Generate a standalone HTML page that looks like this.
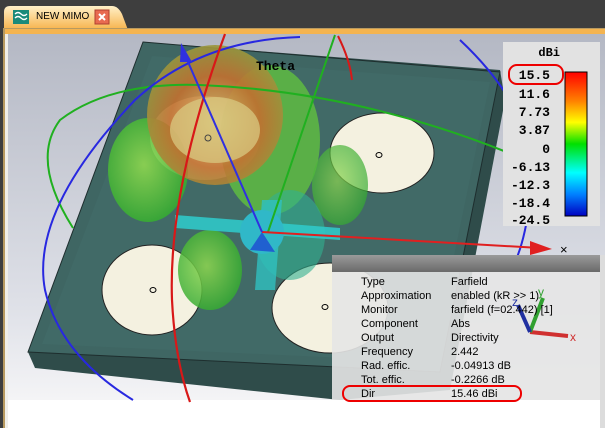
<!DOCTYPE html>
<html><head><meta charset="utf-8"><style>
html,body{margin:0;padding:0;width:605px;height:428px;overflow:hidden;background:#fff;font-family:"Liberation Sans",sans-serif}
.t{position:absolute;font-size:11px;color:#000;line-height:14px}
.m{font-family:"Liberation Mono",monospace;font-weight:bold;font-size:13px;position:absolute;text-align:right;width:50px}
</style></head><body>
<svg width="605" height="428" style="position:absolute;left:0;top:0">
<defs>
<linearGradient id="tab" x1="0" y1="0" x2="0" y2="1"><stop offset="0" stop-color="#fff0c8"/><stop offset="1" stop-color="#f7b24a"/></linearGradient>
<linearGradient id="bg" x1="0" y1="0" x2="0" y2="1"><stop offset="0" stop-color="#b4b8c4"/><stop offset=".75" stop-color="#dfe1e8"/><stop offset="1" stop-color="#f4f4f6"/></linearGradient>
<linearGradient id="cb" x1="0" y1="0" x2="0" y2="1"><stop offset="0" stop-color="#ff0000"/><stop offset=".2" stop-color="#ff8000"/><stop offset=".35" stop-color="#ffff00"/><stop offset=".5" stop-color="#00e000"/><stop offset=".7" stop-color="#00ffff"/><stop offset=".85" stop-color="#0080ff"/><stop offset="1" stop-color="#0000c0"/></linearGradient>
<linearGradient id="hd" x1="0" y1="0" x2="0" y2="1"><stop offset="0" stop-color="#9a9a9a"/><stop offset="1" stop-color="#6a6a6a"/></linearGradient>
<radialGradient id="red" cx=".5" cy=".55" r=".6"><stop offset="0" stop-color="#d8c070"/><stop offset=".55" stop-color="#c07030"/><stop offset="1" stop-color="#90a040"/></radialGradient>
<radialGradient id="grn" cx=".45" cy=".45" r=".6"><stop offset="0" stop-color="#90d850"/><stop offset="1" stop-color="#30a830"/></radialGradient>
</defs>
<rect width="605" height="428" fill="#3e3e3e"/>
<path d="M4 30 L4 12 Q4 6 10 6 L112 6 Q118 6 122 14 L128 30 Z" fill="url(#tab)"/>
<rect x="3" y="28" width="602" height="400" fill="#b89a60"/>
<rect x="5" y="29" width="600" height="5" fill="#f4b450"/>
<rect x="5" y="34" width="3" height="394" fill="#f0eee8"/>
<rect x="8" y="34" width="597" height="366" fill="url(#bg)"/>
<rect x="8" y="400" width="597" height="28" fill="#fff"/>
<rect x="13" y="10" width="16" height="14" fill="#1a8a7a"/>
<path d="M15 14 q3 -3 6 0 t6 0 M15 18 q3 -3 6 0 t6 0" stroke="#fff" fill="none" stroke-width="1.3"/>
<rect x="95" y="10" width="14" height="14" fill="#e86a50" stroke="#b04030"/>
<path d="M99 14 l6 6 M105 14 l-6 6" stroke="#fff" stroke-width="2"/>
<polygon points="143,42 500,70 505,100 450,390 340,400 35,368 28,352" fill="#2f4c4a"/>
<polygon points="143,42 500,72 440,372 28,352" fill="#3f6663" stroke="#1e2e2e" stroke-width="1"/>
<polygon points="152,56 490,82 432,362 42,344" fill="#416a67"/>
<ellipse cx="205" cy="138" rx="55" ry="42" fill="#f4f1e0"/>
<ellipse cx="382" cy="153" rx="52" ry="40" fill="#f4f1e0" stroke="#222"/>
<ellipse cx="152" cy="290" rx="50" ry="45" fill="#f4f1e0" stroke="#222"/>
<ellipse cx="330" cy="308" rx="58" ry="45" fill="#f4f1e0" stroke="#222"/>
<ellipse cx="153" cy="290" rx="3" ry="2.5" fill="none" stroke="#000"/>
<ellipse cx="379" cy="155" rx="3" ry="2.5" fill="none" stroke="#000"/>
<ellipse cx="325" cy="307" rx="3" ry="2.5" fill="none" stroke="#000"/>
<ellipse cx="148" cy="170" rx="40" ry="52" fill="url(#grn)" opacity=".9"/>
<ellipse cx="270" cy="140" rx="50" ry="75" fill="#60c040" opacity=".8"/>
<ellipse cx="340" cy="185" rx="28" ry="40" fill="url(#grn)" opacity=".7"/>
<ellipse cx="210" cy="270" rx="32" ry="40" fill="url(#grn)" opacity=".85"/>
<ellipse cx="290" cy="235" rx="35" ry="45" fill="#30b090" opacity=".6"/>
<ellipse cx="215" cy="115" rx="68" ry="70" fill="url(#red)" opacity=".92"/>
<ellipse cx="215" cy="130" rx="45" ry="33" fill="#d8c880" opacity=".75"/>
<circle cx="208" cy="138" r="3" fill="none" stroke="#444"/>
<polygon points="175,215 340,228 340,240 175,228" fill="#30c8c8" opacity=".9"/>
<polygon points="262,200 282,200 275,290 255,290" fill="#30c0c0" opacity=".8"/>
<circle cx="262" cy="232" r="22" fill="#30b8c8"/>
<polygon points="262,232 250,250 275,252" fill="#2060d0"/>
<path d="M73,228 Q30,160 60,120 Q110,82 200,85 Q380,92 560,175" fill="none" stroke="#20b020" stroke-width="2"/>
<line x1="335" y1="35" x2="268" y2="232" stroke="#20b020" stroke-width="2"/>
<path d="M300,37 Q200,40 135,100 Q30,210 45,290 Q60,355 133,400" fill="none" stroke="#2828e0" stroke-width="2"/>
<path d="M460,40 Q545,120 530,200 Q525,240 515,262" fill="none" stroke="#2828e0" stroke-width="2"/>
<path d="M225,34 Q168,190 172,300 Q175,360 190,402" fill="none" stroke="#d81818" stroke-width="2.2"/>
<path d="M338,36 Q350,60 352,80" fill="none" stroke="#d81818" stroke-width="2"/>
<line x1="262" y1="232" x2="540" y2="248" stroke="#e02020" stroke-width="2"/>
<polygon points="530,241 552,249 530,255" fill="#e02020"/>
<line x1="262" y1="232" x2="185" y2="55" stroke="#3030e0" stroke-width="2"/>
<polygon points="181,43 192,62 180,62" fill="#3030e0"/>
<text x="256" y="70" font-family="Liberation Mono,monospace" font-weight="bold" font-size="13">Theta</text>
<text x="560" y="254" font-size="13">×</text>
<rect x="503" y="42" width="97" height="184" fill="#e2e2e2"/>
<rect x="565" y="72" width="22" height="144" fill="url(#cb)" stroke="#000"/>
<rect x="509" y="65" width="54" height="19" rx="8" fill="none" stroke="#e00" stroke-width="2"/>
<rect x="332" y="255" width="273" height="17" fill="url(#hd)"/>
<rect x="332" y="272" width="268" height="128" fill="#e6e6e6" opacity=".9"/>
<rect x="600" y="255" width="5" height="173" fill="#dcdcdc"/>
<rect x="343" y="386" width="178" height="15" rx="7" fill="none" stroke="#e00" stroke-width="2"/>
<line x1="530" y1="332" x2="568" y2="336" stroke="#d03030" stroke-width="4"/>
<line x1="530" y1="332" x2="543" y2="298" stroke="#30a030" stroke-width="4"/>
<line x1="530" y1="332" x2="518" y2="305" stroke="#2030a0" stroke-width="4"/>
<text x="570" y="341" fill="#d03030" font-size="12">x</text>
<text x="538" y="296" fill="#30a030" font-size="12">y</text>
<text x="512" y="306" fill="#2030a0" font-size="12">z</text>
</svg>
<div class="t" style="left:36px;top:10px;font-size:10px">NEW MIMO</div>
<div class="m" style="left:520px;top:46px;font-size:12px;width:40px">dBi</div>
<div class="m" style="left:500px;top:68px">15.5</div>
<div class="m" style="left:500px;top:87px">11.6</div>
<div class="m" style="left:500px;top:105px">7.73</div>
<div class="m" style="left:500px;top:123px">3.87</div>
<div class="m" style="left:500px;top:142px">0</div>
<div class="m" style="left:500px;top:160px">-6.13</div>
<div class="m" style="left:500px;top:178px">-12.3</div>
<div class="m" style="left:500px;top:196px">-18.4</div>
<div class="m" style="left:500px;top:213px">-24.5</div>
<div class="t" style="left:361px;top:275px">Type<br>Approximation<br>Monitor<br>Component<br>Output<br>Frequency<br>Rad. effic.<br>Tot. effic.<br>Dir</div>
<div class="t" style="left:451px;top:275px">Farfield<br>enabled (kR &gt;&gt; 1)<br>farfield (f=02.442) [1]<br>Abs<br>Directivity<br>2.442<br>-0.04913 dB<br>-0.2266 dB<br>15.46 dBi</div>
</body></html>
